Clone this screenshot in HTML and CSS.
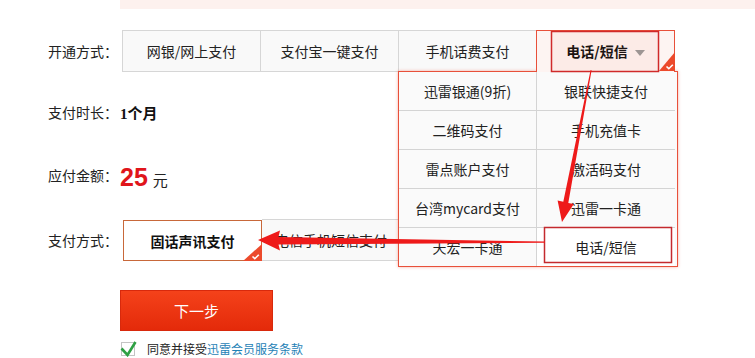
FILE: index.html
```html
<!DOCTYPE html>
<html lang="zh-CN">
    <head>
        <meta charset="UTF-8">
        <title>开通会员</title>
        <link rel="stylesheet" href="styles.css">
    </head>
    <body>
        <div class="page">
            <div class="topbar"></div>
            <div class="form">
                <div class="row row-open">
                    <span class="label">开通方式：</span>
                    <div class="tabs">
                        <div class="tab">网银/网上支付</div>
                        <div class="tab">支付宝一键支付</div>
                        <div class="tab">手机话费支付</div>
                        <div class="tab tab-active">电话/短信<i class="caret"></i>
                            <svg class="corner" viewBox="0 0 16 19"><path d="M16 0V19H0Z" fill="#ec4a2c"/><path d="M7.5 14.5l2.3 2.2 4-4" stroke="#fff" stroke-width="1.6" fill="none"/></svg>
                        </div>
                        <div class="menu">
                            <div class="menu-item">迅雷银通(9折)</div>
                            <div class="menu-item">银联快捷支付</div>
                            <div class="menu-item">二维码支付</div>
                            <div class="menu-item">手机充值卡</div>
                            <div class="menu-item">雷点账户支付</div>
                            <div class="menu-item">激活码支付</div>
                            <div class="menu-item">台湾mycard支付</div>
                            <div class="menu-item">迅雷一卡通</div>
                            <div class="menu-item">天宏一卡通</div>
                            <div class="menu-item menu-item-on">电话/短信</div>
                        </div>
                    </div>
                </div>
                <div class="row row-time">
                    <span class="label">支付时长：</span>
                    <span class="duration">1个月</span>
                </div>
                <div class="row row-price">
                    <span class="label">应付金额：</span>
                    <span class="amount"><span class="price">25</span><span class="unit">元</span></span>
                </div>
                <div class="row row-pay">
                    <span class="label">支付方式：</span>
                    <div class="pay-tabs">
                        <div class="pay-tab pay-tab-active">固话声讯支付
                            <svg class="corner" viewBox="0 0 19 17"><path d="M19 0V17H0Z" fill="#ec4a2c"/><path d="M9.5 12.5l2.3 2.2 4-4" stroke="#fff" stroke-width="1.6" fill="none"/></svg>
                        </div>
                        <div class="pay-tab">电信手机短信支付</div>
                    </div>
                </div>
                <div class="row row-submit">
                    <button class="next-btn">下一步</button>
                </div>
                <div class="agree">
                    <svg class="agree-check" viewBox="0 0 17 17"><rect x="1.5" y="2.5" width="13" height="13" fill="#fff" stroke="#c4c4c4"/><path d="M1.5 8.5l6 6.5 8-13" stroke="#2ea043" stroke-width="2.6" fill="none"/></svg>
                    <span>同意并接受<a class="agree-link" href="#">迅雷会员服务条款</a></span>
                </div>
            </div>
            <!-- annotation marks drawn over the page -->
            <svg class="marks" width="755" height="358" viewBox="0 0 755 358">
                <rect x="551.5" y="31.5" width="107" height="40" fill="rgba(230,70,40,0.05)" stroke="#d02a2a" stroke-width="1.5"/>
                <rect x="544.5" y="227.5" width="127" height="35" fill="none" stroke="#c42a2e" stroke-width="1.5"/>
                <polygon points="562,222 557.6,200.6 563.3,201.8 590.6,70 591.6,70.2 568.3,202.9 573.8,204" fill="#ee1a1a"/>
                <polygon points="258,240 280,230.5 278.5,237 545,241.6 545,242.8 278.5,244.5 280,250.5" fill="#ee1a1a"/>
            </svg>
        </div>
    </body>
</html>
```
FILE: styles.css
```css
body
{
    margin: 0;
    font-family: "Noto Sans CJK SC", "Microsoft YaHei", sans-serif;
    font-size: 14px;
    color: #333;
    background-color: #fff;
}
.page
{
    position: relative;
    width: 755px;
    height: 358px;
    overflow: hidden;
}
.topbar
{
    margin-left: 120px;
    height: 9px;
    background-color: #fdf1ee;
}
.form
{
    padding-left: 48px;
}
.row
{
    display: flex;
    align-items: center;
    height: 42px;
}
.label
{
    flex: none;
    width: 72px;
    line-height: 20px;
    color: #222;
}
.row-open
{
    margin-top: 21px;
}
.tabs
{
    position: relative;
    display: flex;
    margin-left: 2px;
}
.tab
{
    box-sizing: border-box;
    width: 139px;
    height: 42px;
    margin-right: -1px;
    border: 1px solid #d6d6d6;
    background-color: #f9f9f9;
    text-align: center;
    line-height: 40px;
    color: #222;
}
.tab-active
{
    position: relative;
    z-index: 3;
    border-color: #e8503a;
    border-bottom: none;
    background-color: #fdf4f2;
    font-weight: bold;
    color: #111;
}
.caret
{
    display: inline-block;
    margin-left: 7px;
    vertical-align: middle;
    border: 5px solid transparent;
    border-top: 6px solid #999;
    border-bottom: 0;
}
.corner
{
    position: absolute;
    right: -1px;
    bottom: 1px;
    width: 16px;
    height: 19px;
}
.menu
{
    position: absolute;
    z-index: 2;
    left: 276px;
    top: 41px;
    display: grid;
    grid-template-columns: 138px 138px;
    width: 278px;
    border: 1px solid #e8503a;
    background-color: #fafafa;
    box-shadow: 0 0 3px rgba(232, 80, 58, 0.45);
}
.menu-item
{
    box-sizing: border-box;
    height: 39px;
    border-bottom: 1px solid #d4d4d4;
    text-align: center;
    line-height: 38px;
    color: #222;
}
.menu-item:nth-child(odd)
{
    border-right: 1px solid #d4d4d4;
}
.menu-item:nth-last-child(-n+2)
{
    height: 38px;
    border-bottom: none;
}
.menu-item-on
{
    background-color: #fff;
}
.row-time
{
    margin-top: 19px;
}
.duration
{
    font-family: "Liberation Serif", "Noto Sans CJK SC", serif;
    font-weight: bold;
    font-size: 15px;
    color: #111;
}
.row-price
{
    margin-top: 21px;
}
.amount
{
    margin-top: 6px;
    line-height: 26px;
}
.price
{
    font-family: "Liberation Sans", Arial, sans-serif;
    font-weight: bold;
    font-size: 25px;
    color: #e0151b;
}
.unit
{
    margin-left: 5px;
    font-size: 15px;
    color: #222;
}
.row-pay
{
    margin-top: 23px;
    height: 42px;
}
.pay-tabs
{
    display: flex;
    margin-left: 3px;
}
.pay-tab
{
    box-sizing: border-box;
    width: 139px;
    height: 42px;
    border: 1px solid #d6d6d6;
    border-left: none;
    background-color: #f9f9f9;
    text-align: center;
    line-height: 40px;
    color: #222;
}
.pay-tab-active
{
    position: relative;
    height: 41px;
    margin-top: 1px;
    border: 1px solid #c8683a;
    background-color: #fff;
    font-weight: bold;
    color: #111;
}
.pay-tab-active .corner
{
    width: 19px;
    height: 17px;
    bottom: -1px;
}
.row-submit
{
    margin-top: 29px;
    height: 41px;
}
.next-btn
{
    width: 153px;
    height: 41px;
    margin-left: 72px;
    border: 1px solid #d8290c;
    background: linear-gradient(#f4421a, #e42a0a);
    color: #fff;
    font-family: "Noto Sans CJK SC", sans-serif;
    font-size: 15px;
    cursor: pointer;
}
.agree
{
    display: flex;
    align-items: center;
    margin-top: 9px;
    margin-left: 72px;
    font-size: 12px;
    line-height: 17px;
    color: #222;
}
.agree-check
{
    width: 17px;
    height: 17px;
    margin-right: 10px;
}
.agree-link
{
    color: #1f82b6;
    text-decoration: none;
}
.marks
{
    position: absolute;
    top: 0;
    left: 0;
    z-index: 10;
    pointer-events: none;
}
```
